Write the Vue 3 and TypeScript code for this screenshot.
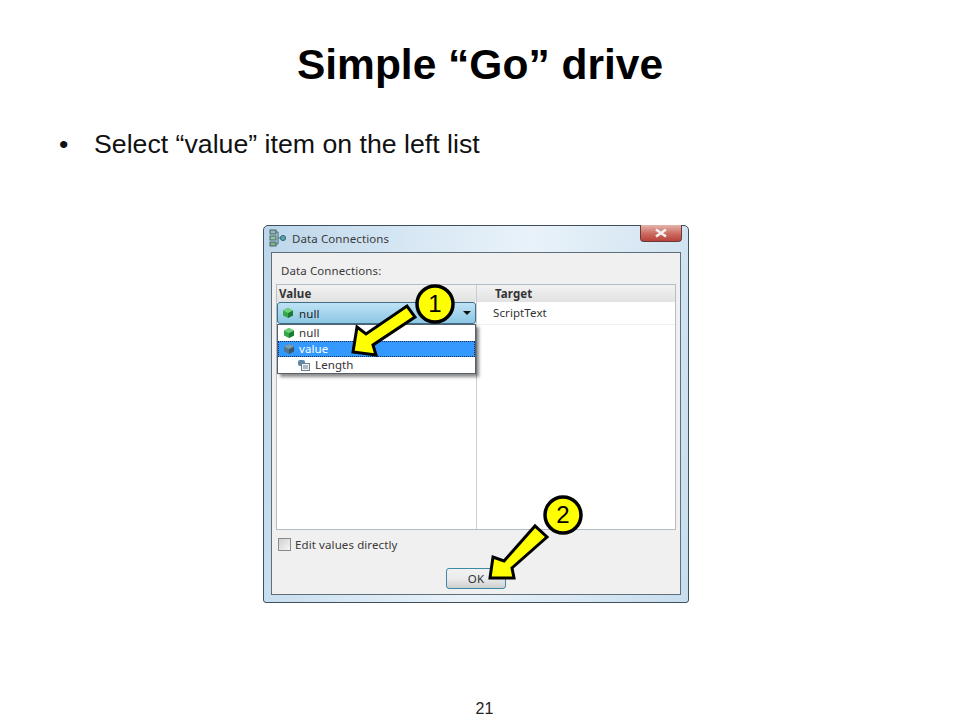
<script setup lang="ts">
interface Row { label: string; selected?: boolean; child?: boolean; kind: 'green' | 'grey' | 'stack' }
const rows: Row[] = [
  { label: 'null', kind: 'green' },
  { label: 'value', selected: true, kind: 'grey' },
  { label: 'Length', child: true, kind: 'stack' },
]
</script>

<template>
  <div class="slide">
    <h1 class="title">Simple “Go” drive</h1>
    <ul class="bullets">
      <li><span class="dot">•</span><span>Select “value” item on the left list</span></li>
    </ul>

    <div class="window">
      <div class="titlebar">
        <svg class="app-icon" width="18" height="18" viewBox="0 0 18 18">
          <rect x="1" y="1" width="6" height="4" fill="#8fb6b0" stroke="#44666a" />
          <rect x="1" y="7" width="6" height="4" fill="#8fc4a0" stroke="#44666a" />
          <rect x="1" y="13" width="6" height="4" fill="#7fb08a" stroke="#44666a" />
          <path d="M7 3h2v12H7M9 9h3" fill="none" stroke="#44666a" />
          <circle cx="14" cy="9" r="2.6" fill="#5aa0b0" stroke="#336a78" />
        </svg>
        <span class="win-title">Data Connections</span>
        <div class="close">
          <svg width="16" height="10" viewBox="0 0 16 10">
            <path d="M3 1.500l10 7M13 1.500L3 8.500" stroke="#f2f2f2" stroke-width="2.600" fill="none" />
          </svg>
        </div>
      </div>

      <div class="panel">
        <div class="panel-label">Data Connections:</div>
        <div class="table">
          <div class="col col-left">
            <div class="head">Value</div>
            <div class="combo">
              <svg class="cube" width="12" height="12" viewBox="0 0 12 12">
                <path d="M6 1l5 2.500v5L6 11 1 8.500v-5z" fill="#37a84a" />
                <path d="M6 6l5-2.500v5L6 11z" fill="#1e7a33" />
                <path d="M6 1l5 2.500L6 6 1 3.500z" fill="#6ed07a" />
              </svg>
              <span>null</span>
              <span class="caret"></span>
            </div>
            <div class="menu-anchor">
              <div class="menu">
                <div v-for="r in rows" :key="r.label" class="menu-row" :class="{ selected: r.selected, child: r.child }">
                  <svg v-if="r.kind !== 'stack'" class="cube" width="12" height="12" viewBox="0 0 12 12">
                    <path d="M6 1l5 2.500v5L6 11 1 8.500v-5z" :fill="r.kind === 'green' ? '#37a84a' : '#4f7690'" />
                    <path d="M6 6l5-2.500v5L6 11z" :fill="r.kind === 'green' ? '#1e7a33' : '#38566c'" />
                    <path d="M6 1l5 2.500L6 6 1 3.500z" :fill="r.kind === 'green' ? '#6ed07a' : '#7f9db0'" />
                  </svg>
                  <svg v-else class="cube" width="14" height="12" viewBox="0 0 14 12">
                    <rect x="1" y="1" width="7" height="6" rx="2" fill="#5f87a6" />
                    <rect x="4.500" y="4.500" width="8" height="7" fill="#eef2f5" stroke="#6d7f8c" />
                    <path d="M6 7h5M6 9h5" stroke="#6d7f8c" />
                  </svg>
                  <span>{{ r.label }}</span>
                </div>
              </div>
            </div>
          </div>
          <div class="col col-right">
            <div class="head head-right">Target</div>
            <div class="target">ScriptText</div>
          </div>
        </div>
        <label class="check">
          <span class="box"></span>
          <span>Edit values directly</span>
        </label>
        <div class="actions">
          <div class="ok">OK</div>
        </div>
      </div>
    </div>

    <div class="page-no">21</div>

    <svg class="callouts" width="960" height="720" viewBox="0 0 960 720">
      <g stroke="#000" stroke-width="3" stroke-linejoin="miter" fill="#ffff00">
        <polygon points="353,352 357,327 366,334 407,306 415,317 373,345 376,355" />
        <polygon points="490,578 493,557 504,561 535,526 547,537 512,568 514,578" />
      </g>
      <g stroke="#000" stroke-width="3.500" fill="#ffff00">
        <circle cx="435" cy="304" r="18" />
        <circle cx="563" cy="515" r="18" />
      </g>
      <text x="435" y="312" class="num">1</text>
      <text x="563" y="523" class="num">2</text>
    </svg>
  </div>
</template>

<style>
html, body { margin: 0; background: #fff; }
</style>

<style scoped>
.slide {
  position: relative;
  width: 960px;
  height: 720px;
  overflow: hidden;
  background: #fff;
  color: #000;
  font-family: "Liberation Sans", Arial, sans-serif;
}
.title {
  margin: 0;
  padding-top: 38px;
  height: 53px;
  line-height: 53px;
  font-size: 42.500px;
  font-weight: 700;
  text-align: center;
}
.bullets {
  list-style: none;
  margin: 0;
  padding: 38px 0 0 59px;
  height: 28px;
}
.bullets li {
  display: flex;
  font-size: 26.700px;
  line-height: 30px;
  color: #111;
}
.dot { width: 35px; }
.window {
  box-sizing: border-box;
  width: 426px;
  height: 378px;
  margin: 68px 0 0 263px;
  padding: 0 7px 7px 7px;
  border: 1px solid #3f4f5c;
  border-radius: 5px 5px 3px 3px;
  background: linear-gradient(100deg, #bcd6ea 0%, #d7e7f4 30%, #e9f2f9 55%, #c7ddee 100%);
  display: flex;
  flex-direction: column;
  font-family: "Noto Sans", "Open Sans", sans-serif;
  font-size: 11.500px;
  letter-spacing: 0.1px;
  color: #333;
}
.titlebar {
  height: 26px;
  flex: none;
  display: flex;
  align-items: center;
  gap: 5px;
  position: relative;
  top: -1px;
}
.app-icon { margin-left: -2px; }
.win-title { font-size: 11.500px; color: #3a3a3a; }
.close {
  position: absolute;
  right: -1px;
  top: 0;
  width: 42px;
  height: 17px;
  box-sizing: border-box;
  border: 1px solid #6a3a3a;
  border-top: 0;
  border-radius: 0 0 4px 4px;
  background: linear-gradient(#e4b4ac, #cc6a60 55%, #b8433c);
  display: flex;
  align-items: center;
  justify-content: center;
}
.panel {
  flex: 1;
  box-sizing: border-box;
  padding: 11px 4px 0 4px;
  background: #f0f0f0;
  border: 1px solid #5f6f7a;
  display: flex;
  flex-direction: column;
}
.panel-label { height: 20px; line-height: 14px; padding-left: 5px; color: #3a3a3a; }
.table {
  height: 246px;
  flex: none;
  display: flex;
  background: #fff;
  border: 1px solid #b4bcc4;
  box-sizing: border-box;
}
.col { display: flex; flex-direction: column; }
.col-left { width: 200px; border-right: 1px solid #c8ced4; box-sizing: border-box; }
.col-right { flex: 1; }
.head {
  height: 17px;
  line-height: 17px;
  padding-left: 2px;
  font-weight: 700;
  background: linear-gradient(#f2f2f2, #e2e2e2);
  color: #333;
}
.head-right { padding-left: 18px; }
.combo {
  box-sizing: border-box;
  height: 22px;
  display: flex;
  align-items: center;
  gap: 5px;
  padding: 0 4px;
  border: 1px solid #3f6f88;
  border-radius: 3px;
  background: linear-gradient(#bfe3f5, #8cc6e4);
  color: #222;
  position: relative;
}
.caret {
  position: absolute;
  right: 4px;
  top: 8px;
  width: 0;
  height: 0;
  border: 4px solid transparent;
  border-top: 4px solid #111;
}
.menu-anchor { position: relative; height: 0; }
.menu {
  position: absolute;
  left: 0;
  top: 0;
  width: 199px;
  box-sizing: border-box;
  height: 50px;
  background: #fff;
  border: 1px solid #55606a;
  box-shadow: 3px 3px 3px rgba(0, 0, 0, 0.45);
}
.menu-row {
  height: 16px;
  line-height: 16px;
  display: flex;
  align-items: center;
  gap: 4px;
  padding-left: 5px;
  box-sizing: border-box;
  color: #333;
}
.menu-row.selected {
  background: #3399ff;
  color: #fff;
  border: 1px dotted #10305a;
  padding-left: 4px;
}
.menu-row.child { padding-left: 19px; gap: 4px; }
.target {
  height: 22px;
  line-height: 22px;
  padding-left: 16px;
  color: #333;
  border-bottom: 1px solid #eef0f2;
}
.check {
  display: flex;
  align-items: center;
  gap: 4px;
  height: 16px;
  margin-top: 6px;
  padding-left: 2px;
  color: #3a3a3a;
}
.box {
  width: 11px;
  height: 11px;
  border: 1px solid #8a8a8a;
  background: linear-gradient(135deg, #d0d0d0, #f6f6f6);
}
.actions {
  display: flex;
  justify-content: center;
  margin-top: 16px;
}
.ok {
  box-sizing: border-box;
  width: 60px;
  height: 21px;
  line-height: 19px;
  text-align: center;
  border: 1px solid #3a8aa8;
  border-radius: 3px;
  background: linear-gradient(#f2f2f2, #ebebeb 50%, #cfcfcf);
  color: #333;
  margin-right: 0;
}
.page-no {
  position: absolute;
  left: 0;
  right: 0;
  top: 700px;
  text-align: center;
  font-size: 16px;
  line-height: 18px;
  padding-left: 9px;
  color: #222;
}
.callouts {
  position: absolute;
  left: 0;
  top: 0;
  pointer-events: none;
}
.num {
  font-family: "Liberation Sans", Arial, sans-serif;
  font-size: 24px;
  text-anchor: middle;
  fill: #000;
}
</style>
